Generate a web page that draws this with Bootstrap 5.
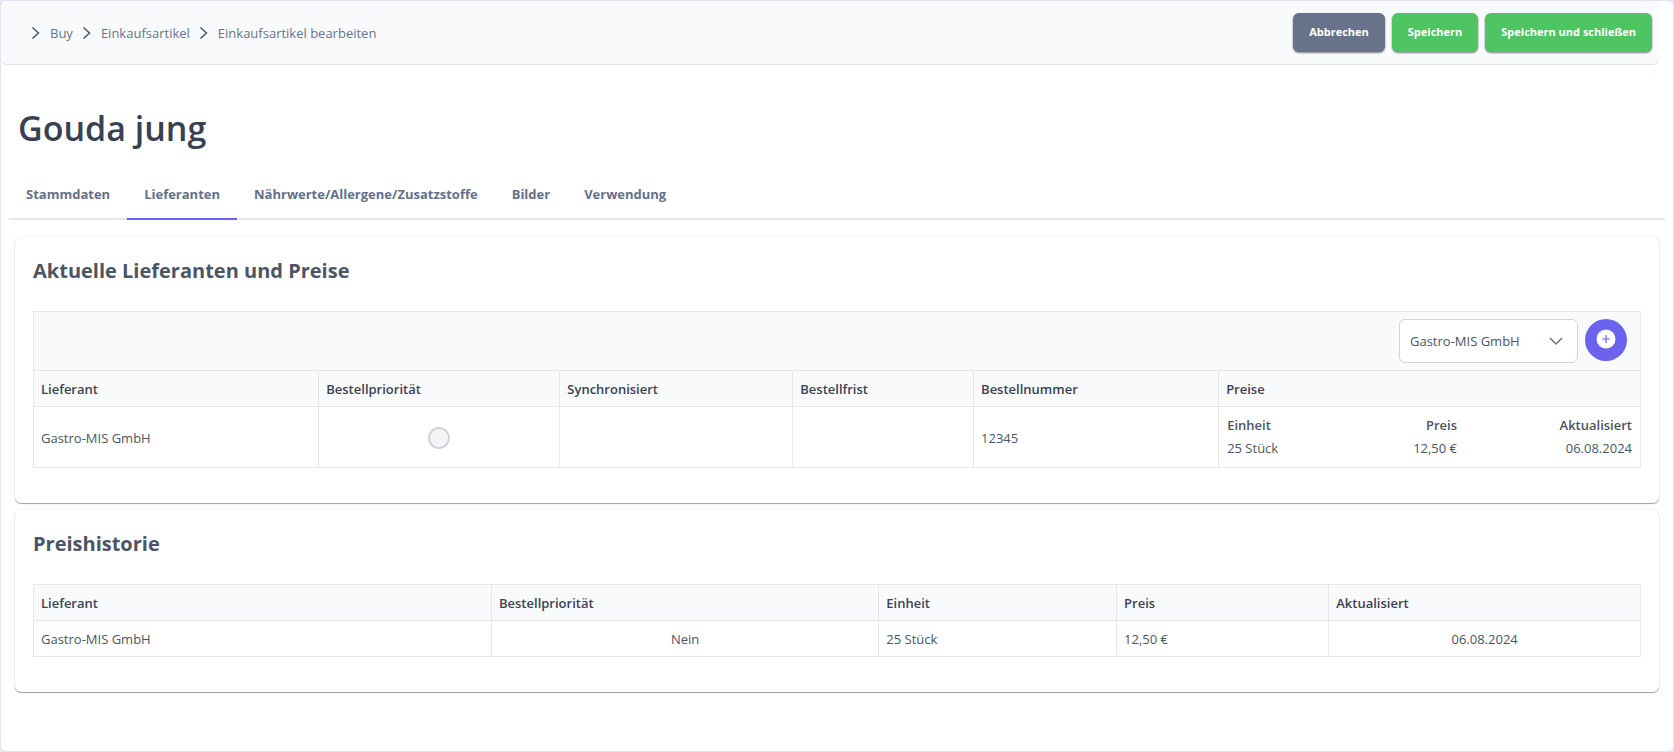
<!DOCTYPE html>
<html lang="de">
<head>
<meta charset="utf-8">
<meta name="viewport" content="width=device-width, initial-scale=1">
<title>Einkaufsartikel bearbeiten</title>
<link href="https://cdn.jsdelivr.net/npm/bootstrap@5.3.0/dist/css/bootstrap.min.css" rel="stylesheet">
<style>
:root { --line: #e5e7eb; --soft: #f8fafc; --accent: #6b63ee; }
body { font-family: "Segoe UI", "Open Sans", sans-serif; font-size: 13px; line-height: 20px; color: #4b5563; background: #e2e4f0; padding: 1px; }
.page-shell { background: #fff; border-radius: 5px; min-height: calc(100vh - 2px); }
.topbar { background: var(--soft); border-bottom: 1px solid #dde2ea; border-radius: 6px; margin-right: 14px; padding: 12px 7px 12px 30px; min-height: 64px; }
.tool-gap { gap: 7px; }
.crumbs { gap: 9px; }
.crumbs a { color: #68748b; }
.crumbs svg { width: 9px; height: 14px; fill: none; stroke: #4b5563; stroke-width: 1.5; }
.crumbs li { gap: 10px; }
.action-btn { --bs-btn-color: #fff; --bs-btn-hover-color: #fff; --bs-btn-bg: #4fc463; --bs-btn-hover-bg: #43b357; --bs-btn-border-width: 0; --bs-btn-padding-x: 16px; --bs-btn-padding-y: 0; --bs-btn-font-size: 11px; --bs-btn-font-weight: 700; --bs-btn-border-radius: 6px; height: 39px; box-shadow: 0 1px 2px rgba(0,0,0,.5); }
.action-cancel { --bs-btn-bg: #68738b; --bs-btn-hover-bg: #58637a; }
.page-title { font-size: 34px; line-height: 44px; font-weight: 600; color: #374151; margin: 41px 17px 22px; }
.tab-strip { border-bottom: 2px solid var(--line); margin: 0 8px 17px; }
.tab-strip .nav-link { color: #64708a; font-weight: 700; padding: 12px 17px 14px; border-bottom: 2px solid transparent; margin-bottom: -2px; }
.tab-strip .nav-link.active { border-color: var(--accent); }
.panel { background: #fff; border-radius: 6px; margin: 0 14px 7px; padding: 18px 18px 35px; box-shadow: 0 1px 1px rgba(0,0,0,.35), 0 0 2px rgba(0,0,0,.12); }
.panel h2 { font-size: 20px; line-height: 32px; font-weight: 700; margin: 0 0 24px; }
.data-grid { table-layout: fixed; width: 100%; border-collapse: collapse; }
.data-grid > * > tr > * { border: 1px solid var(--line); padding: 8px 7px 7px; }
.data-grid > thead > tr > th { background: var(--soft); color: #3b4253; font-weight: 600; }
.data-grid > thead > tr > .grid-tools { padding: 7px 13px 7px 7px; }
.supplier-select { width: 179px; height: 44px; font-size: 13px; color: #4b5563; padding: 2px 36px 0 10px; border-color: #d1d5db; border-radius: 6px; background-image: url("data:image/svg+xml,%3csvg xmlns='http://www.w3.org/2000/svg' viewBox='0 0 14 14'%3e%3cpath fill='none' stroke='%236b7280' stroke-width='1.5' d='M1 4l6 6 6-6'/%3e%3c/svg%3e"); background-size: 14px 14px; background-position: right 14px center; }
.add-btn { width: 42px; height: 42px; background: var(--accent); border: 0; padding: 0; }
.priority-radio { width: 22px; height: 22px; border: 2px solid #d1d5db; background-color: #f3f4f6; }
.form-check-input.priority-radio:disabled { opacity: 1; }
.price-list { width: 100%; line-height: 20px; }
.price-list th { font-weight: 600; padding: 0 0 3px 1px; }
.price-list td { padding: 0 0 2px 1px; }
.price-list th:last-child { width: 43%; }
.price-list tr > * + * { text-align: right; padding-left: 0; padding-right: 1px; }
.w-a { width: 17.75%; } .w-b { width: 15%; } .w-c { width: 14.5%; } .w-d { width: 11.25%; } .w-e { width: 15.25%; }
.h-a { width: 28.5%; } .h-b { width: 24.1%; } .h-c { width: 14.8%; } .h-d { width: 13.2%; }
</style>
</head>
<body>
<div class="page-shell">
  <header class="topbar d-flex align-items-center justify-content-between">
    <nav aria-label="Brotkrumen">
      <ol class="crumbs list-unstyled d-flex mb-0">
        <li class="d-flex align-items-center"><svg viewBox="0 0 9 14" aria-hidden="true"><path d="M1.500 1.500 7.500 7l-6 5.500"/></svg><a class="text-decoration-none" href="#">Buy</a></li>
        <li class="d-flex align-items-center"><svg viewBox="0 0 9 14" aria-hidden="true"><path d="M1.500 1.500 7.500 7l-6 5.500"/></svg><a class="text-decoration-none" href="#">Einkaufsartikel</a></li>
        <li class="d-flex align-items-center"><svg viewBox="0 0 9 14" aria-hidden="true"><path d="M1.500 1.500 7.500 7l-6 5.500"/></svg><a class="text-decoration-none" href="#" aria-current="page">Einkaufsartikel bearbeiten</a></li>
      </ol>
    </nav>
    <div class="d-flex tool-gap">
      <button type="button" class="btn action-btn action-cancel">Abbrechen</button>
      <button type="button" class="btn action-btn">Speichern</button>
      <button type="button" class="btn action-btn">Speichern und schließen</button>
    </div>
  </header>
  <main>
    <h1 class="page-title">Gouda jung</h1>
    <ul class="nav tab-strip">
      <li class="nav-item"><a class="nav-link" href="#">Stammdaten</a></li>
      <li class="nav-item"><a class="nav-link active" aria-current="true" href="#">Lieferanten</a></li>
      <li class="nav-item"><a class="nav-link" href="#">Nährwerte/Allergene/Zusatzstoffe</a></li>
      <li class="nav-item"><a class="nav-link" href="#">Bilder</a></li>
      <li class="nav-item"><a class="nav-link" href="#">Verwendung</a></li>
    </ul>
    <section class="panel">
      <h2>Aktuelle Lieferanten und Preise</h2>
      <table class="data-grid">
        <colgroup><col class="w-a"><col class="w-b"><col class="w-c"><col class="w-d"><col class="w-e"><col></colgroup>
        <thead>
          <tr><th colspan="6" class="grid-tools">
            <div class="d-flex justify-content-end tool-gap">
              <select class="form-select supplier-select" aria-label="Lieferant"><option>Gastro-MIS GmbH</option></select>
              <button type="button" class="btn rounded-circle add-btn d-flex align-items-center justify-content-center" aria-label="Hinzufügen"><svg width="20" height="22" viewBox="0 0 20 22" aria-hidden="true"><circle cx="10" cy="10" r="9.500" fill="#fff"/><path d="M10 6v8M6 10h8" stroke="#6b63ee" stroke-width="1.200"/></svg></button>
            </div>
          </th></tr>
          <tr><th>Lieferant</th><th>Bestellpriorität</th><th>Synchronisiert</th><th>Bestellfrist</th><th>Bestellnummer</th><th>Preise</th></tr>
        </thead>
        <tbody>
          <tr>
            <td>Gastro-MIS GmbH</td>
            <td class="text-center"><input class="form-check-input priority-radio m-0 align-middle" type="radio" disabled aria-label="Bestellpriorität Gastro-MIS GmbH"></td>
            <td></td><td></td><td>12345</td>
            <td>
              <table class="price-list">
                <thead><tr><th>Einheit</th><th>Preis</th><th>Aktualisiert</th></tr></thead>
                <tbody><tr><td>25 Stück</td><td>12,50 €</td><td>06.08.2024</td></tr></tbody>
              </table>
            </td>
          </tr>
        </tbody>
      </table>
    </section>
    <section class="panel mb-0">
      <h2>Preishistorie</h2>
      <table class="data-grid">
        <colgroup><col class="h-a"><col class="h-b"><col class="h-c"><col class="h-d"><col></colgroup>
        <thead><tr><th>Lieferant</th><th>Bestellpriorität</th><th>Einheit</th><th>Preis</th><th>Aktualisiert</th></tr></thead>
        <tbody><tr><td>Gastro-MIS GmbH</td><td class="text-center">Nein</td><td>25 Stück</td><td>12,50 €</td><td class="text-center">06.08.2024</td></tr></tbody>
      </table>
    </section>
  </main>
</div>
<script src="https://cdn.jsdelivr.net/npm/bootstrap@5.3.0/dist/js/bootstrap.bundle.min.js"></script>
</body>
</html>
